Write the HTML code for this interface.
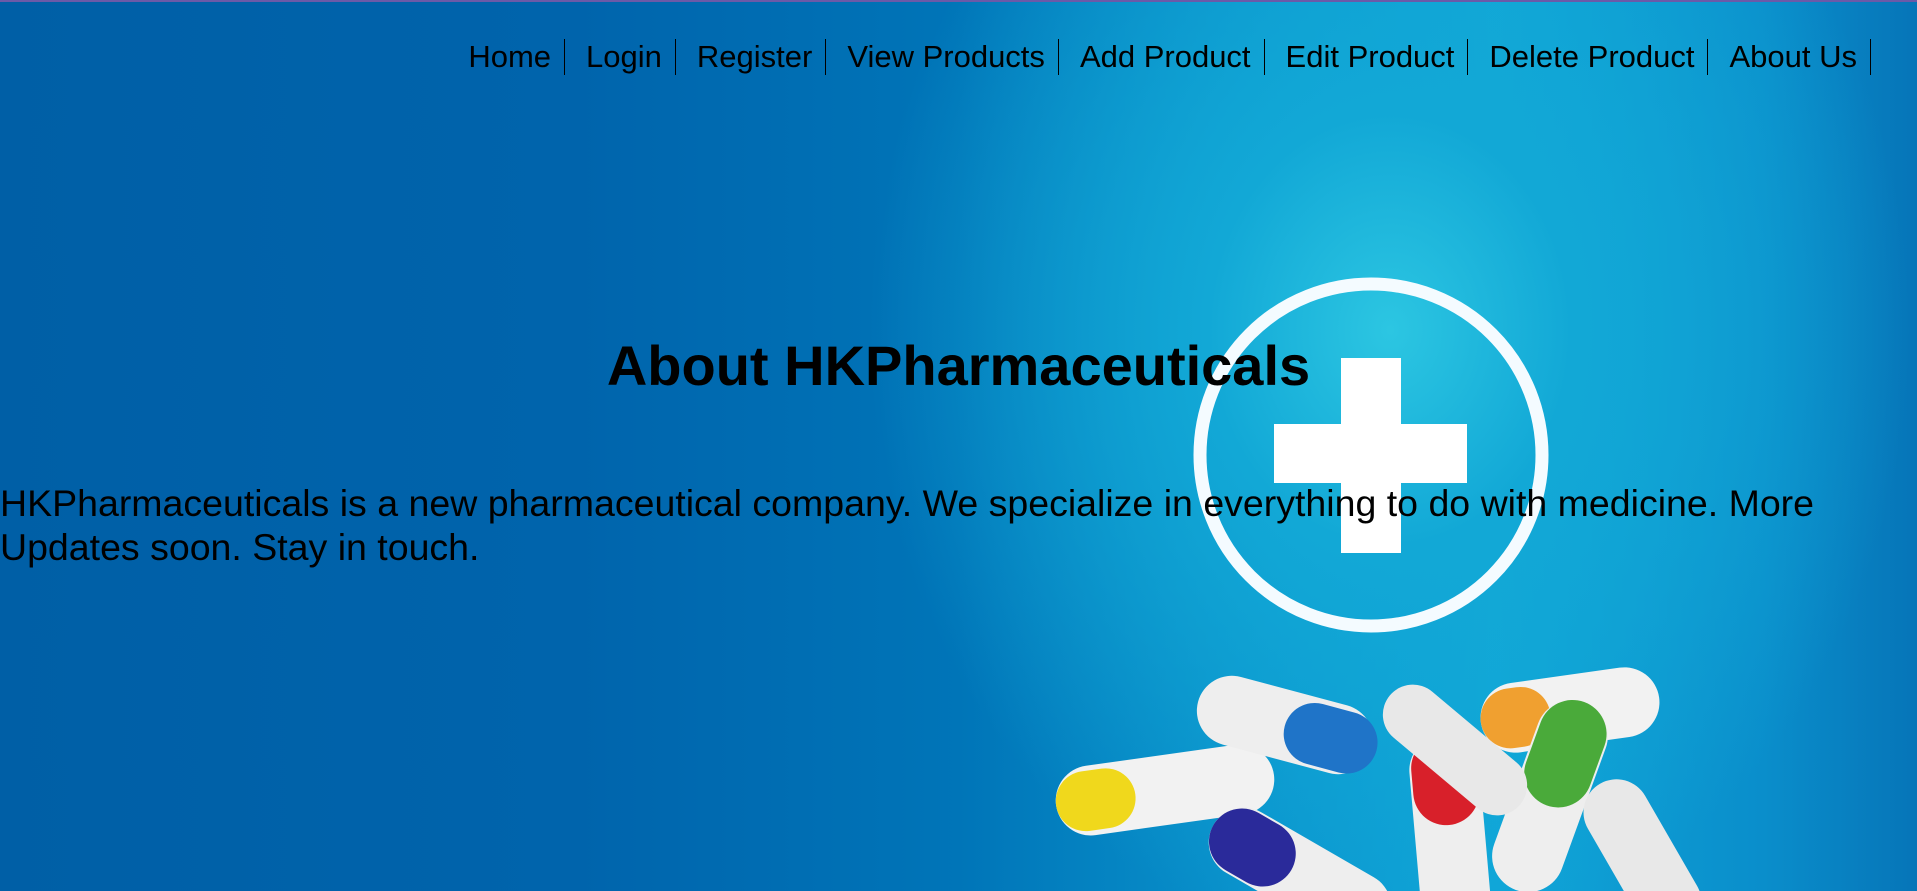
<!DOCTYPE html>
<html><head><meta charset="utf-8"><style>
html,body{margin:0;padding:0;width:1917px;height:891px;overflow:hidden;font-family:"Liberation Sans",Arial,sans-serif;}
body{position:relative;background:
radial-gradient(ellipse 520px 620px at 1390px 330px,#2cc6e2 0%,#12a8d6 35%,rgba(8,128,196,0) 100%),
linear-gradient(90deg,#005fa6 0%,#0064ac 30%,#0075b8 50%,#0b97cf 68%,#10a6d8 78%,#0a8ecb 92%,#0675b8 100%);}
.top{position:absolute;left:0;top:0;width:100%;height:2px;background:#6b5aa8;}
ul{position:absolute;right:46px;top:39px;margin:0;padding:0;list-style:none;display:flex;}
li{font-size:31px;line-height:36px;padding:0 13px 0 21px;border-right:1px solid #000;color:#000;}
li:first-child{padding-left:0}
h1{position:absolute;left:0;width:100%;top:334px;margin:0;text-align:center;font-size:56px;line-height:64px;font-weight:bold;color:#000;}
p{position:absolute;left:0;top:481px;margin:0;width:1850px;font-size:37.5px;line-height:44px;color:#000;}
svg{position:absolute;left:0;top:0}
</style></head><body>
<div class="top"></div>
<svg width="1917" height="891">
<circle cx="1371" cy="455" r="171" fill="none" stroke="#f4fbff" stroke-width="13"/>
<rect x="1274" y="424" width="193" height="59" fill="#fff"/>
<rect x="1341" y="358" width="60" height="195" fill="#fff"/>
<g>
<rect x="1055" y="755" width="220" height="70" rx="35" fill="#f2f2f2" transform="rotate(-8 1165 790)"/>
<rect x="1055" y="760" width="80" height="60" rx="30" fill="#f0d81c" transform="rotate(-8 1165 790)"/>
<rect x="1195" y="690" width="180" height="70" rx="35" fill="#eeeeee" transform="rotate(15 1285 725)"/>
<rect x="1285" y="695" width="95" height="62" rx="31" fill="#1f74c8" transform="rotate(15 1285 725)"/>
<rect x="1480" y="675" width="180" height="70" rx="35" fill="#f2f2f2" transform="rotate(-8 1570 710)"/>
<rect x="1480" y="680" width="70" height="60" rx="30" fill="#f0a030" transform="rotate(-8 1570 710)"/>
<rect x="1450" y="760" width="200" height="72" rx="36" fill="#eeeeee" transform="rotate(-70 1550 796)"/>
<rect x="1540" y="762" width="110" height="68" rx="34" fill="#4aaa3a" transform="rotate(-70 1550 796)"/>
<rect x="1350" y="800" width="200" height="70" rx="35" fill="#eeeeee" transform="rotate(85 1450 835)"/>
<rect x="1350" y="802" width="90" height="66" rx="33" fill="#d8202a" transform="rotate(85 1450 835)"/>
<rect x="1200" y="840" width="200" height="70" rx="35" fill="#eeeeee" transform="rotate(30 1300 875)"/>
<rect x="1200" y="842" width="90" height="66" rx="33" fill="#2a2a9a" transform="rotate(30 1300 875)"/>
<rect x="1560" y="820" width="170" height="66" rx="33" fill="#e8e8e8" transform="rotate(60 1640 853)"/>
<rect x="1370" y="720" width="170" height="60" rx="30" fill="#e8e8e8" transform="rotate(40 1455 750)"/>
</g>
</svg>
<ul><li>Home</li><li>Login</li><li>Register</li><li>View Products</li><li>Add Product</li><li>Edit Product</li><li>Delete Product</li><li>About Us</li></ul>
<h1>About HKPharmaceuticals</h1>
<p>HKPharmaceuticals is a new pharmaceutical company. We specialize in everything to do with medicine. More Updates soon. Stay in touch.</p>
</body></html>
